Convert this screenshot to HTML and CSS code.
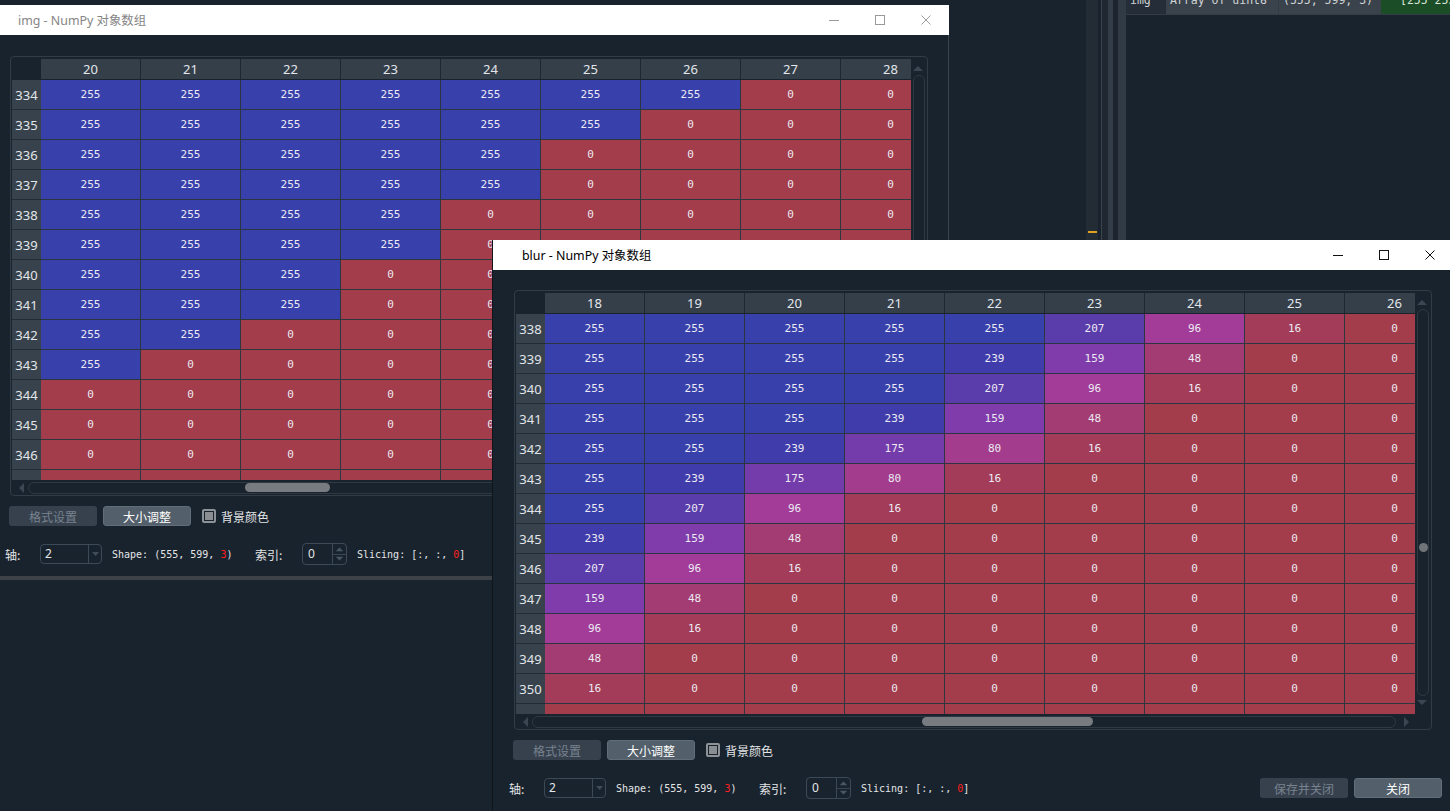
FILE: index.html
```html
<!DOCTYPE html>
<html lang="zh">
<head>
<meta charset="utf-8">
<title>NumPy 对象数组</title>
<link rel="stylesheet" href="styles.css">
</head>
<body>
<div class="desktop">
  <div class="app">
    <div class="app-editor"></div>
    <div class="app-scroll"><div class="marker"></div></div>
    <div class="ap-gap3"></div>
    <div class="ap-line"></div>
    <div class="ap-gap6"></div>
    <div class="ap-strip5"></div>
    <div class="ap-gap5"></div>
    <div class="ap-strip8"></div>
    <div class="varpanel">
      <div class="var-row">
        <div class="vc vc-name">img</div>
        <div class="vc vc-type">Array of uint8</div>
        <div class="vc vc-size">(555, 599, 3)</div>
        <div class="vc vc-value">[255 255 255]</div>
      </div>
    </div>
  </div>

  <section class="win win-img">
    <header class="titlebar">
      <span class="title">img - NumPy 对象数组</span>
      <div class="caption">
        <span class="cap"><svg viewBox="0 0 10 10"><path d="M0 5.5H10"/></svg></span>
        <span class="cap"><svg viewBox="0 0 10 10"><rect x="0.5" y="0.5" width="9" height="9"/></svg></span>
        <span class="cap"><svg viewBox="0 0 10 10"><path d="M0.5 0.5L9.5 9.5M9.5 0.5L0.5 9.5"/></svg></span>
      </div>
    </header>
    <div class="win-body">
      <div class="frame">
        <div class="table">
          <div class="corner"></div>
          <div class="ch">20</div><div class="ch">21</div><div class="ch">22</div><div class="ch">23</div><div class="ch">24</div><div class="ch">25</div><div class="ch">26</div><div class="ch">27</div><div class="ch">28</div>
          <div class="rh">334</div><div class="c v255">255</div><div class="c v255">255</div><div class="c v255">255</div><div class="c v255">255</div><div class="c v255">255</div><div class="c v255">255</div><div class="c v255">255</div><div class="c v0">0</div><div class="c v0">0</div>
          <div class="rh">335</div><div class="c v255">255</div><div class="c v255">255</div><div class="c v255">255</div><div class="c v255">255</div><div class="c v255">255</div><div class="c v255">255</div><div class="c v0">0</div><div class="c v0">0</div><div class="c v0">0</div>
          <div class="rh">336</div><div class="c v255">255</div><div class="c v255">255</div><div class="c v255">255</div><div class="c v255">255</div><div class="c v255">255</div><div class="c v0">0</div><div class="c v0">0</div><div class="c v0">0</div><div class="c v0">0</div>
          <div class="rh">337</div><div class="c v255">255</div><div class="c v255">255</div><div class="c v255">255</div><div class="c v255">255</div><div class="c v255">255</div><div class="c v0">0</div><div class="c v0">0</div><div class="c v0">0</div><div class="c v0">0</div>
          <div class="rh">338</div><div class="c v255">255</div><div class="c v255">255</div><div class="c v255">255</div><div class="c v255">255</div><div class="c v0">0</div><div class="c v0">0</div><div class="c v0">0</div><div class="c v0">0</div><div class="c v0">0</div>
          <div class="rh">339</div><div class="c v255">255</div><div class="c v255">255</div><div class="c v255">255</div><div class="c v255">255</div><div class="c v0">0</div><div class="c v0">0</div><div class="c v0">0</div><div class="c v0">0</div><div class="c v0">0</div>
          <div class="rh">340</div><div class="c v255">255</div><div class="c v255">255</div><div class="c v255">255</div><div class="c v0">0</div><div class="c v0">0</div><div class="c v0">0</div><div class="c v0">0</div><div class="c v0">0</div><div class="c v0">0</div>
          <div class="rh">341</div><div class="c v255">255</div><div class="c v255">255</div><div class="c v255">255</div><div class="c v0">0</div><div class="c v0">0</div><div class="c v0">0</div><div class="c v0">0</div><div class="c v0">0</div><div class="c v0">0</div>
          <div class="rh">342</div><div class="c v255">255</div><div class="c v255">255</div><div class="c v0">0</div><div class="c v0">0</div><div class="c v0">0</div><div class="c v0">0</div><div class="c v0">0</div><div class="c v0">0</div><div class="c v0">0</div>
          <div class="rh">343</div><div class="c v255">255</div><div class="c v0">0</div><div class="c v0">0</div><div class="c v0">0</div><div class="c v0">0</div><div class="c v0">0</div><div class="c v0">0</div><div class="c v0">0</div><div class="c v0">0</div>
          <div class="rh">344</div><div class="c v0">0</div><div class="c v0">0</div><div class="c v0">0</div><div class="c v0">0</div><div class="c v0">0</div><div class="c v0">0</div><div class="c v0">0</div><div class="c v0">0</div><div class="c v0">0</div>
          <div class="rh">345</div><div class="c v0">0</div><div class="c v0">0</div><div class="c v0">0</div><div class="c v0">0</div><div class="c v0">0</div><div class="c v0">0</div><div class="c v0">0</div><div class="c v0">0</div><div class="c v0">0</div>
          <div class="rh">346</div><div class="c v0">0</div><div class="c v0">0</div><div class="c v0">0</div><div class="c v0">0</div><div class="c v0">0</div><div class="c v0">0</div><div class="c v0">0</div><div class="c v0">0</div><div class="c v0">0</div>
          <div class="rh">347</div><div class="c v0">0</div><div class="c v0">0</div><div class="c v0">0</div><div class="c v0">0</div><div class="c v0">0</div><div class="c v0">0</div><div class="c v0">0</div><div class="c v0">0</div><div class="c v0">0</div>
        </div>
        <div class="vscroll">
          <svg class="arr-v" viewBox="0 0 10 5"><polygon points="0,5 5,0 10,5"/></svg>
          <div class="vtrack"></div>
          <svg class="arr-v" viewBox="0 0 10 5"><polygon points="0,0 10,0 5,5"/></svg>
        </div>
        <div class="hscroll">
          <svg class="arr-h" viewBox="0 0 5 10"><polygon points="5,0 5,10 0,5"/></svg>
          <div class="htrack"><div class="hhandle hh-img"></div></div>
          <svg class="arr-h arr-right" viewBox="0 0 5 10"><polygon points="0,0 0,10 5,5"/></svg>
        </div>
        <div class="sc-corner"></div>
      </div>
      <div class="btn-row">
        <button class="btn btn-dis">格式设置</button>
        <button class="btn btn-on">大小调整</button>
        <span class="check"><span class="box"><span class="fill"></span></span><span class="check-lbl">背景颜色</span></span>
      </div>
      <div class="ctrl-row">
        <span class="lbl lbl-axis">轴:</span>
        <span class="combo"><span class="combo-val">2</span><span class="combo-btn"><svg viewBox="0 0 7 4"><polygon points="0,0 7,0 3.5,4"/></svg></span></span>
        <span class="mono shape">Shape: (555, 599, <span class="red">3</span>)</span>
        <span class="lbl lbl-idx">索引:</span>
        <span class="spin"><span class="spin-val">0</span><span class="spin-btns"><svg viewBox="0 0 14 20"><polygon points="3,7 7,3 11,7"/><path d="M0 10.5H14"/><polygon points="3,13 11,13 7,17"/></svg></span></span>
        <span class="mono slicing">Slicing: [:, :, <span class="red">0</span>]</span>
        <span class="spacer"></span>
        <button class="btn btn-dis">保存并关闭</button>
        <button class="btn btn-on">关闭</button>
      </div>
    </div>
  </section>

  <section class="win win-blur">
    <header class="titlebar">
      <span class="title">blur - NumPy 对象数组</span>
      <div class="caption">
        <span class="cap"><svg viewBox="0 0 10 10"><path d="M0 5.5H10"/></svg></span>
        <span class="cap"><svg viewBox="0 0 10 10"><rect x="0.5" y="0.5" width="9" height="9"/></svg></span>
        <span class="cap"><svg viewBox="0 0 10 10"><path d="M0.5 0.5L9.5 9.5M9.5 0.5L0.5 9.5"/></svg></span>
      </div>
    </header>
    <div class="win-body">
      <div class="frame">
        <div class="table">
          <div class="corner"></div>
          <div class="ch">18</div><div class="ch">19</div><div class="ch">20</div><div class="ch">21</div><div class="ch">22</div><div class="ch">23</div><div class="ch">24</div><div class="ch">25</div><div class="ch">26</div>
          <div class="rh">338</div><div class="c v255">255</div><div class="c v255">255</div><div class="c v255">255</div><div class="c v255">255</div><div class="c v255">255</div><div class="c v207">207</div><div class="c v96">96</div><div class="c v16">16</div><div class="c v0">0</div>
          <div class="rh">339</div><div class="c v255">255</div><div class="c v255">255</div><div class="c v255">255</div><div class="c v255">255</div><div class="c v239">239</div><div class="c v159">159</div><div class="c v48">48</div><div class="c v0">0</div><div class="c v0">0</div>
          <div class="rh">340</div><div class="c v255">255</div><div class="c v255">255</div><div class="c v255">255</div><div class="c v255">255</div><div class="c v207">207</div><div class="c v96">96</div><div class="c v16">16</div><div class="c v0">0</div><div class="c v0">0</div>
          <div class="rh">341</div><div class="c v255">255</div><div class="c v255">255</div><div class="c v255">255</div><div class="c v239">239</div><div class="c v159">159</div><div class="c v48">48</div><div class="c v0">0</div><div class="c v0">0</div><div class="c v0">0</div>
          <div class="rh">342</div><div class="c v255">255</div><div class="c v255">255</div><div class="c v239">239</div><div class="c v175">175</div><div class="c v80">80</div><div class="c v16">16</div><div class="c v0">0</div><div class="c v0">0</div><div class="c v0">0</div>
          <div class="rh">343</div><div class="c v255">255</div><div class="c v239">239</div><div class="c v175">175</div><div class="c v80">80</div><div class="c v16">16</div><div class="c v0">0</div><div class="c v0">0</div><div class="c v0">0</div><div class="c v0">0</div>
          <div class="rh">344</div><div class="c v255">255</div><div class="c v207">207</div><div class="c v96">96</div><div class="c v16">16</div><div class="c v0">0</div><div class="c v0">0</div><div class="c v0">0</div><div class="c v0">0</div><div class="c v0">0</div>
          <div class="rh">345</div><div class="c v239">239</div><div class="c v159">159</div><div class="c v48">48</div><div class="c v0">0</div><div class="c v0">0</div><div class="c v0">0</div><div class="c v0">0</div><div class="c v0">0</div><div class="c v0">0</div>
          <div class="rh">346</div><div class="c v207">207</div><div class="c v96">96</div><div class="c v16">16</div><div class="c v0">0</div><div class="c v0">0</div><div class="c v0">0</div><div class="c v0">0</div><div class="c v0">0</div><div class="c v0">0</div>
          <div class="rh">347</div><div class="c v159">159</div><div class="c v48">48</div><div class="c v0">0</div><div class="c v0">0</div><div class="c v0">0</div><div class="c v0">0</div><div class="c v0">0</div><div class="c v0">0</div><div class="c v0">0</div>
          <div class="rh">348</div><div class="c v96">96</div><div class="c v16">16</div><div class="c v0">0</div><div class="c v0">0</div><div class="c v0">0</div><div class="c v0">0</div><div class="c v0">0</div><div class="c v0">0</div><div class="c v0">0</div>
          <div class="rh">349</div><div class="c v48">48</div><div class="c v0">0</div><div class="c v0">0</div><div class="c v0">0</div><div class="c v0">0</div><div class="c v0">0</div><div class="c v0">0</div><div class="c v0">0</div><div class="c v0">0</div>
          <div class="rh">350</div><div class="c v16">16</div><div class="c v0">0</div><div class="c v0">0</div><div class="c v0">0</div><div class="c v0">0</div><div class="c v0">0</div><div class="c v0">0</div><div class="c v0">0</div><div class="c v0">0</div>
          <div class="rh">351</div><div class="c v0">0</div><div class="c v0">0</div><div class="c v0">0</div><div class="c v0">0</div><div class="c v0">0</div><div class="c v0">0</div><div class="c v0">0</div><div class="c v0">0</div><div class="c v0">0</div>
        </div>
        <div class="vscroll">
          <svg class="arr-v" viewBox="0 0 10 5"><polygon points="0,5 5,0 10,5"/></svg>
          <div class="vtrack"><div class="vhandle"></div></div>
          <svg class="arr-v" viewBox="0 0 10 5"><polygon points="0,0 10,0 5,5"/></svg>
        </div>
        <div class="hscroll">
          <svg class="arr-h" viewBox="0 0 5 10"><polygon points="5,0 5,10 0,5"/></svg>
          <div class="htrack"><div class="hhandle hh-blur"></div></div>
          <svg class="arr-h arr-right" viewBox="0 0 5 10"><polygon points="0,0 0,10 5,5"/></svg>
        </div>
        <div class="sc-corner"></div>
      </div>
      <div class="btn-row">
        <button class="btn btn-dis">格式设置</button>
        <button class="btn btn-on">大小调整</button>
        <span class="check"><span class="box"><span class="fill"></span></span><span class="check-lbl">背景颜色</span></span>
      </div>
      <div class="ctrl-row">
        <span class="lbl lbl-axis">轴:</span>
        <span class="combo"><span class="combo-val">2</span><span class="combo-btn"><svg viewBox="0 0 7 4"><polygon points="0,0 7,0 3.5,4"/></svg></span></span>
        <span class="mono shape">Shape: (555, 599, <span class="red">3</span>)</span>
        <span class="lbl lbl-idx">索引:</span>
        <span class="spin"><span class="spin-val">0</span><span class="spin-btns"><svg viewBox="0 0 14 20"><polygon points="3,7 7,3 11,7"/><path d="M0 10.5H14"/><polygon points="3,13 11,13 7,17"/></svg></span></span>
        <span class="mono slicing">Slicing: [:, :, <span class="red">0</span>]</span>
        <span class="spacer"></span>
        <button class="btn btn-dis">保存并关闭</button>
        <button class="btn btn-on">关闭</button>
      </div>
    </div>
  </section>
</div>
</body>
</html>
```

FILE: styles.css
```css
* { box-sizing: border-box; }
html, body { margin: 0; padding: 0; }
body {
  width: 1450px;
  height: 811px;
  overflow: hidden;
  background: #19232d;
  color: #dfe1e2;
  font-family: "Noto Sans", "Noto Sans CJK SC", sans-serif;
}
.desktop { position: relative; width: 1450px; height: 811px; overflow: hidden; }

/* background application */
.app { display: flex; height: 811px; }
.app-editor { width: 1086px; flex: none; }
.app-scroll { width: 12px; flex: none; background: #232b34; padding-top: 231px; }
.marker { width: 9px; height: 2px; margin-left: 2px; background: #e3a21c; }
.ap-gap3 { width: 3px; flex: none; }
.ap-line { width: 1px; flex: none; background: #3a444e; }
.ap-gap6 { width: 6px; flex: none; background: #1f2730; }
.ap-strip5 { width: 5px; flex: none; background: #333d47; }
.ap-gap5 { width: 5px; flex: none; background: #1c252e; }
.ap-strip8 { width: 8px; flex: none; background: #313b45; }
.varpanel { flex: 1; min-width: 0; }
.var-row {
  display: flex;
  height: 30px;
  margin-top: -15px;
  border-bottom: 1px solid #343d46;
  font: 11.5px "DejaVu Sans Mono", monospace;
  color: #cfd3d6;
}
.vc { display: flex; align-items: center; padding-left: 4px; white-space: nowrap; overflow: hidden; }
.vc-name { width: 40px; background: #252e38; }
.vc-type { width: 112px; background: #3a424b; }
.vc-size { width: 103px; background: #3a424b; border-left: 1px solid #333b44; }
.vc-value { flex: 1; background: #1b4e26; padding-left: 19px; color: #d8e2d8; }

/* windows */
.win {
  position: absolute;
  width: 960px;
  height: 575px;
  background: #19232d;
  display: flex;
  flex-direction: column;
}
.win-img { left: -11px; top: 5px; box-shadow: inset -1px 0 0 #3b444d; border-bottom: 4px solid #3c4248; }
.win-blur { left: 493px; top: 240px; box-shadow: -1px 0 0 #10151a; }

.titlebar { height: 30px; flex: none; background: #ffffff; display: flex; align-items: center; }
.title { flex: 1; padding-left: 29px; font-size: 12.4px; white-space: nowrap; }
.win-img .title { color: #858585; }
.win-blur .title { color: #000000; }
.caption { display: flex; height: 30px; }
.cap { width: 46px; display: flex; align-items: center; justify-content: center; }
.cap svg { width: 10px; height: 10px; display: block; fill: none; stroke-width: 1; }
.win-img .cap svg { stroke: #9a9a9a; }
.win-blur .cap svg { stroke: #111111; }

.win-body { padding: 21px 0 0 20px; display: flex; flex-direction: column; }
.win-blur .win-body { padding-top: 20px; }

.frame {
  width: 918px;
  height: 440px;
  margin-left: 1px;
  border: 1px solid #313c47;
  border-radius: 4px;
  padding: 2px 0 0 1px;
  display: grid;
  grid-template-columns: 899px 16px;
  grid-template-rows: 421px 15px;
}

.table {
  overflow: hidden;
  display: grid;
  grid-template-columns: 29px repeat(9, 100px);
  grid-template-rows: 21px;
  grid-auto-rows: 30px;
}
.corner { background: #19232d; }
.ch {
  background: #343f4a;
  border-right: 1px solid #1e2731;
  border-bottom: 1px solid #19232d;
  display: flex; align-items: center; justify-content: center;
  font-size: 13px;
  color: #e3e6ea;
}
.rh {
  background: #37424c;
  border-bottom: 1px solid #232c35;
  display: flex; align-items: center; justify-content: center;
  font-size: 13px;
  color: #e3e6ea;
}
.c {
  border-right: 1px solid #2b3641;
  border-bottom: 1px solid #2b3641;
  display: flex; align-items: center; justify-content: center;
  font: 11px "DejaVu Sans Mono", monospace;
  color: #eceaf2;
}
.v255 { background: #3841ab; }
.v239 { background: #403cab; }
.v207 { background: #5a3cab; }
.v175 { background: #743cab; }
.v159 { background: #813cab; }
.v96  { background: #a33c99; }
.v80  { background: #a33c8c; }
.v48  { background: #a33c72; }
.v16  { background: #a33c58; }
.v0   { background: #a33c4b; }

.vscroll { display: flex; flex-direction: column; padding: 7px 0 0 2px; }
.arr-v { width: 10px; height: 5px; display: block; fill: #3a4651; }
.vtrack {
  width: 12px;
  height: 387px;
  margin: 4px 0;
  border: 1px solid #2e3944;
  border-radius: 6px;
  display: flex;
  flex-direction: column;
}
.vhandle { width: 9px; height: 9px; border-radius: 50%; background: #6f7478; margin: 233px auto 0; }

.hscroll { display: flex; align-items: center; padding-left: 7px; }
.arr-h { width: 5px; height: 10px; display: block; fill: #3a4651; flex: none; }
.htrack {
  width: 864px;
  height: 12px;
  margin-left: 4px;
  flex: none;
  border: 1px solid #2e3944;
  border-radius: 6px;
  display: flex;
  align-items: center;
}
.arr-right { margin-left: 8px; }
.hhandle { height: 9px; border-radius: 5px; background: #787c80; }
.hh-img { margin-left: 216px; width: 85px; }
.hh-blur { margin-left: 389px; width: 171px; }

/* buttons row */
.btn-row { display: flex; align-items: center; margin-top: 10px; height: 20px; }
.btn {
  width: 88px;
  height: 20px;
  flex: none;
  padding: 0;
  border-radius: 3px;
  border: 1px solid transparent;
  font: 12px "Noto Sans CJK SC", sans-serif;
  display: flex; align-items: center; justify-content: center;
}
.btn-dis { background: #37414e; color: #78838e; }
.btn-on { background: #535f6a; border-color: #616d78; color: #ffffff; margin-left: 6px; }
.check { display: flex; align-items: center; margin-left: 11px; }
.box {
  width: 14px; height: 14px;
  border: 2px solid #8e9297;
  border-radius: 2px;
  padding: 1px;
  display: flex;
}
.fill { flex: 1; background: #8a8e92; }
.check-lbl { margin-left: 5px; font: 12px "Noto Sans CJK SC", sans-serif; color: #e3e5e7; }

/* control row */
.ctrl-row {
  display: flex;
  align-items: center;
  height: 22px;
  margin-top: 17px;
  margin-left: -4px;
  width: 933px;
}
.lbl { font: 12px "Noto Sans CJK SC", sans-serif; color: #e3e5e7; flex: none; }
.lbl-axis { width: 35px; }
.lbl-idx { width: 47px; }
.combo {
  width: 62px; height: 20px; flex: none;
  border: 1px solid #3c4957;
  border-radius: 4px;
  display: flex;
}
.combo-val { flex: 1; padding-left: 4px; font-size: 12px; line-height: 18px; color: #e3e5e7; }
.combo-btn { width: 13px; border-left: 1px solid #3c4957; display: flex; align-items: center; justify-content: center; }
.combo-btn svg { width: 7px; height: 4px; fill: #3f4c59; }
.mono { font: 10px "DejaVu Sans Mono", monospace; color: #e3e5e7; white-space: pre; flex: none; }
.shape { margin-left: 10px; width: 143px; }
.slicing { margin-left: 10px; }
.red { color: #ff1f1f; }
.spin {
  width: 45px; height: 22px; flex: none;
  border: 1px solid #3c4957;
  border-radius: 4px;
  display: flex;
}
.spin-val { width: 30px; padding-left: 5px; font-size: 12px; line-height: 20px; color: #e3e5e7; }
.spin-btns { flex: 1; border-left: 1px solid #3c4957; display: flex; }
.spin-btns svg { width: 13px; height: 20px; fill: #4a5764; stroke: #3c4957; stroke-width: 1; }
.spin-btns svg polygon { stroke: none; }
.spacer { flex: 1; }
.ctrl-row .btn-on { margin-left: 6px; }
```
